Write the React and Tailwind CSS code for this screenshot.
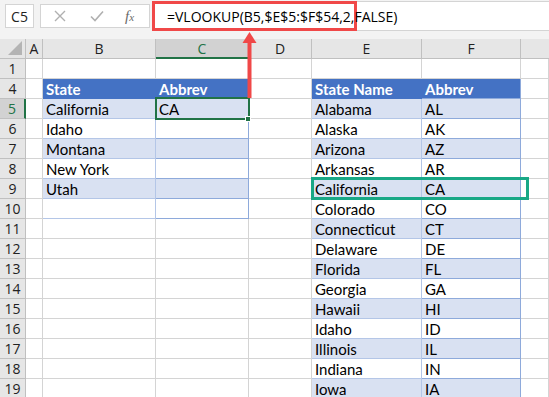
import * as React from 'react';

const COLS = [
    { key: 'A', w: 'w-[17px]' },
    { key: 'B', w: 'w-[113px]' },
    { key: 'C', w: 'w-[93px]' },
    { key: 'D', w: 'w-[63px]' },
    { key: 'E', w: 'w-[110px]' },
    { key: 'F', w: 'w-[99px]' },
    { key: 'G', w: 'flex-1' },
];

const LEFT = [
    ['California', 'CA'],
    ['Idaho', ''],
    ['Montana', ''],
    ['New York', ''],
    ['Utah', ''],
    ['', ''],
];

const RIGHT = [
    ['Alabama', 'AL'],
    ['Alaska', 'AK'],
    ['Arizona', 'AZ'],
    ['Arkansas', 'AR'],
    ['California', 'CA'],
    ['Colorado', 'CO'],
    ['Connecticut', 'CT'],
    ['Delaware', 'DE'],
    ['Florida', 'FL'],
    ['Georgia', 'GA'],
    ['Hawaii', 'HI'],
    ['Idaho', 'ID'],
    ['Illinois', 'IL'],
    ['Indiana', 'IN'],
    ['Iowa', 'IA'],
];

const ROWS = [1, 4, 5, 6, 7, 8, 9, 10, 11, 12, 13, 14, 15, 16, 17, 18, 19];

// work out what a cell looks like from its place in the two tables
const cellInfo = (col, row) => {
    let text = '';
    let bg = 'bg-white';
    let bottom = 'border-[#d4d4d4]';
    let right = 'border-[#d4d4d4]';
    let txt = 'text-black';

    const inLeft = (col === 'B' || col === 'C') && row >= 4 && row <= 10;
    const inRight = (col === 'E' || col === 'F') && row >= 4 && row <= 19;

    if (inLeft || inRight) {
        bottom = 'border-[#8eaadb]';
        right = col === 'B' || col === 'E' ? 'border-[#b4c6e7]' : 'border-[#8eaadb]';
        if (row === 4) {
            bg = 'bg-[#4472c4]';
            txt = 'text-white font-bold';
            right = col === 'B' || col === 'E' ? 'border-[#4472c4]' : 'border-[#8eaadb]';
            text = { B: 'State', C: 'Abbrev', E: 'State Name', F: 'Abbrev' }[col];
        } else {
            bg = row % 2 === 1 ? 'bg-[#d9e1f2]' : 'bg-white';
            const data = inLeft ? LEFT[row - 5] : RIGHT[row - 5];
            text = data[col === 'B' || col === 'E' ? 0 : 1];
        }
    }
    // border just before a table
    if ((col === 'A' && row >= 4 && row <= 10) || (col === 'D' && row >= 4)) right = 'border-[#8eaadb]';
    if (row === 1 && ['B', 'C', 'E', 'F'].includes(col)) bottom = 'border-[#8eaadb]';

    return { text, bg, bottom, right, txt };
};

const FormulaBar = () => (
    <div className="h-[39px] bg-[#f3f3f3] relative flex items-start pt-[4px] pl-[5px]">
        <div className="w-[29px] h-[24px] bg-white border border-[#d4d4d4] flex items-center justify-center text-[14px] text-[#222] font-['Open_Sans',sans-serif]">
            C5
        </div>
        <div className="ml-[6px] w-[110px] h-[24px] bg-white border border-[#d4d4d4] flex items-center">
            <svg width="12" height="12" viewBox="0 0 12 12" className="ml-[13px]">
                <path d="M1 1 L11 11 M11 1 L1 11" stroke="#b0b0b0" strokeWidth="1.4" fill="none" />
            </svg>
            <svg width="14" height="12" viewBox="0 0 14 12" className="ml-[24px]">
                <path d="M1 6.5 L5 10.5 L13 1.5" stroke="#b0b0b0" strokeWidth="1.6" fill="none" />
            </svg>
            <span className="ml-[21px] text-[15px] italic text-[#6a6a6a] font-['Liberation_Serif',serif] leading-none">
                f<span className="text-[11px]">x</span>
            </span>
        </div>
        <div className="ml-[2px] -mt-[3px] flex-1 h-[30px] bg-white border-y border-[#d4d4d4] flex items-center">
            <div className="w-[205px] h-[30px] border-[3px] border-[#f04848] flex items-center pl-[12px] text-[14px] text-black font-['Open_Sans',sans-serif] whitespace-nowrap">
                =VLOOKUP(B5,$E$5:$F$54,2,FALSE)
            </div>
        </div>
    </div>
);

const HeaderRow = () => (
    <div className="flex h-[20px] bg-[#e6e6e6] font-['Open_Sans',sans-serif] text-[14px] text-[#222]">
        <div className="w-[26px] h-full border-r border-b border-[#c0c0c0] relative">
            <svg width="14" height="14" viewBox="0 0 14 14" className="absolute right-[3px] bottom-[3px]">
                <polygon points="14,0 14,14 0,14" fill="#b4b4b4" />
            </svg>
        </div>
        {COLS.map((c) => (
            <div
                key={c.key}
                className={`${c.w} h-full border-r flex items-center justify-center ${
                    c.key === 'C'
                        ? 'bg-[#d2d2d2] border-b-2 border-b-[#217346] text-[#217346] border-r-[#c0c0c0]'
                        : 'border-b border-[#c0c0c0]'
                } ${c.key === 'G' ? 'border-r-0' : ''}`}
            >
                {c.key === 'G' ? '' : c.key}
            </div>
        ))}
    </div>
);

const SheetRow = ({ row }) => (
    <div className="flex h-[20px]">
        <div
            className={`w-[26px] h-full flex items-center justify-center text-[14px] font-['Open_Sans',sans-serif] border-b border-[#c0c0c0] ${
                row === 5
                    ? 'bg-[#d2d2d2] border-r-2 border-r-[#217346] text-[#217346]'
                    : 'bg-[#e6e6e6] border-r border-r-[#c0c0c0] text-[#222]'
            }`}
        >
            {row}
        </div>
        {COLS.map((c) => {
            const info = cellInfo(c.key, row);
            return (
                <div
                    key={c.key}
                    className={`${c.w} h-full border-b border-r ${info.bottom} ${info.right} ${info.bg} ${info.txt} pl-[3px] pt-[1px] text-[15px] leading-[19px] font-['Lato',sans-serif] whitespace-nowrap overflow-hidden`}
                >
                    {info.text}
                </div>
            );
        })}
    </div>
);

export default function App() {
    return (
        <div className="w-[549px] h-[397px] overflow-hidden bg-white relative">
            <FormulaBar />
            <HeaderRow />
            {ROWS.map((r) => (
                <SheetRow key={r} row={r} />
            ))}

            {/* active cell C5 */}
            <div className="absolute left-[155px] top-[97px] w-[95px] h-[23px] border-2 border-[#217346] pointer-events-none" />
            <div className="absolute left-[245px] top-[116px] w-[6px] h-[6px] bg-[#217346] border border-white" />

            {/* red arrow from formula to cell */}
            <svg width="20" height="70" viewBox="0 0 20 70" className="absolute left-[240px] top-[30px]">
                <rect x="7.5" y="10" width="4" height="58" fill="#f04848" />
                <polygon points="2.5,13 9.5,2 16.5,13" fill="#f04848" />
            </svg>

            {/* lookup hit */}
            <div className="absolute left-[311px] top-[177px] w-[218px] h-[23px] border-[3px] border-[#19a886] pointer-events-none" />
        </div>
    );
}
